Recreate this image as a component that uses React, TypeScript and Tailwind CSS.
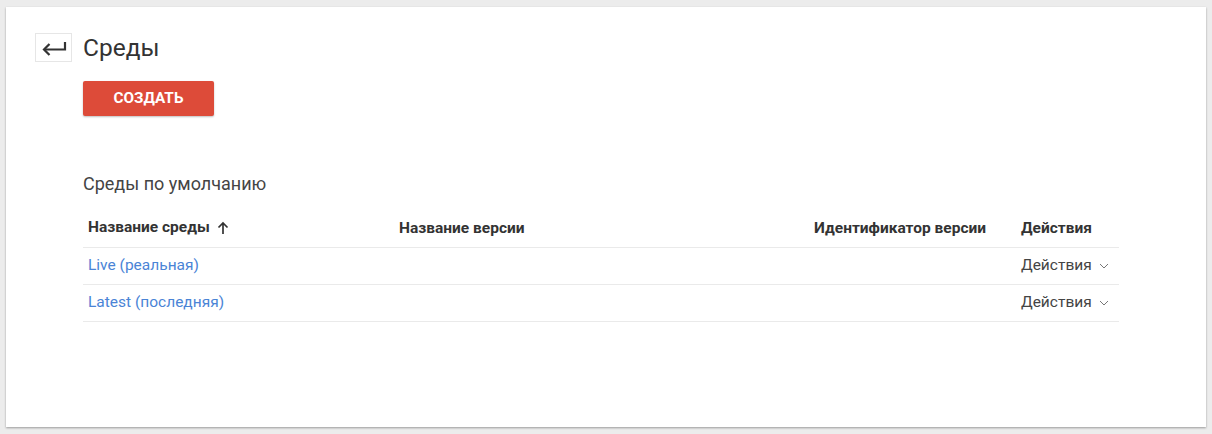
import React from "react";

const rows = ["Live (реальная)", "Latest (последняя)"];

function Chevron() {
  return (
    <svg width="10" height="6" viewBox="0 0 10 6" className="ml-[7px] mt-[1px]">
      <path d="M1 1l4 4 4-4" fill="none" stroke="#777" strokeWidth="1" />
    </svg>
  );
}

export default function App() {
  return (
    <div
      className="w-[1212px] h-[434px] bg-[#ececec] pt-[7px] pl-[6px] pr-[6px] pb-[7px]"
      style={{ fontFamily: "Roboto, 'Noto Sans', Arial, sans-serif" }}
    >
      <div className="h-full bg-white shadow-[0_1px_2px_rgba(0,0,0,0.35)] pl-[29px] pr-[87px] pt-[25px]">
        <div className="flex items-center">
          <button className="w-[37px] h-[29px] border border-[#e6e6e6] flex items-center justify-center">
            <svg width="26" height="18" viewBox="0 0 26 18">
              <path d="M24 3v7.5H3" fill="none" stroke="#333" strokeWidth="2.2" />
              <path d="M8.5 5L3 10.5l5.5 5.5" fill="none" stroke="#333" strokeWidth="2.2" />
            </svg>
          </button>
          <h1 className="ml-[11px] text-[24.5px] leading-[30px] text-[#333] font-normal pt-[1px]">Среды</h1>
        </div>
        <div className="ml-[48px]">
          <button className="mt-[18px] w-[131px] h-[35px] bg-[#dd4b39] text-white text-[15.3px] font-bold rounded-[2px] shadow-[0_1px_2px_rgba(0,0,0,0.25)]">
            СОЗДАТЬ
          </button>
          <div className="mt-[57px] text-[18px] leading-[22px] text-[#444]">Среды по умолчанию</div>
          <table className="mt-[15px] w-[1036px] border-collapse text-[15.5px] table-fixed">
            <colgroup>
              <col className="w-[311px]" />
              <col className="w-[415px]" />
              <col className="w-[207px]" />
              <col className="w-[103px]" />
            </colgroup>
            <thead>
              <tr className="h-[37px] border-b border-[#eaeaea]">
                <th className="text-left font-bold text-[#333] px-[5px] pb-[1px]">
                  <span className="inline-flex items-center">
                    Название среды
                    <svg width="12" height="14" viewBox="0 0 12 14" className="ml-[7px]">
                      <path d="M6 13V2M1.5 6.5L6 2l4.5 4.5" fill="none" stroke="#333" strokeWidth="1.7" />
                    </svg>
                  </span>
                </th>
                <th className="text-left font-bold text-[#333] px-[5px]">Название версии</th>
                <th className="text-left font-bold text-[#333] px-[5px]">Идентификатор версии</th>
                <th className="text-left font-bold text-[#333] px-[5px]">Действия</th>
              </tr>
            </thead>
            <tbody>
              {rows.map((r) => (
                <tr key={r} className="h-[37px] border-b border-[#eaeaea]">
                  <td className="px-[5px] text-[#4a84d6]">{r}</td>
                  <td className="px-[5px]"></td>
                  <td className="px-[5px]"></td>
                  <td className="px-[5px] text-[#444]">
                    <span className="inline-flex items-center">
                      Действия
                      <Chevron />
                    </span>
                  </td>
                </tr>
              ))}
            </tbody>
          </table>
        </div>
      </div>
    </div>
  );
}
